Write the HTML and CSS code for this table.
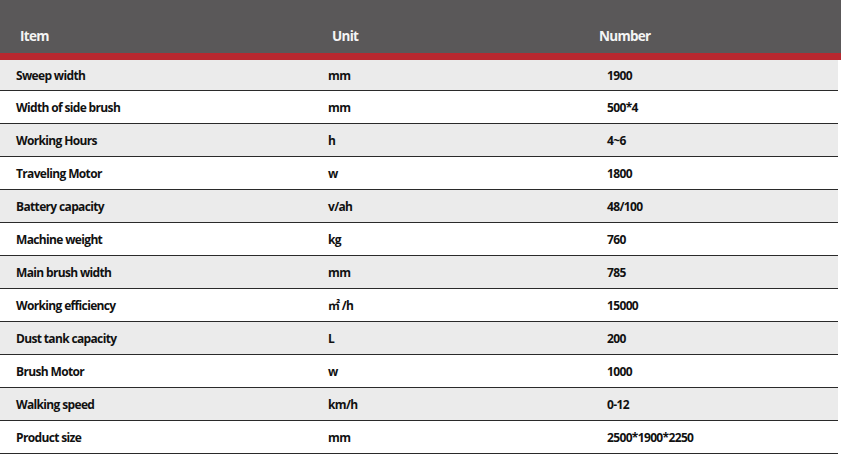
FILE: index.html
```html
<!DOCTYPE html>
<html>
<head>
<meta charset="utf-8">
<link rel="stylesheet" href="styles.css">
</head>
<body>
<div class="spec">
  <div class="head">
    <div class="hc c1">Item</div>
    <div class="hc c2">Unit</div>
    <div class="hc c3">Number</div>
  </div>
  <div class="row first odd"><div class="cell">Sweep width</div><div class="cell">mm</div><div class="cell">1900</div></div>
  <div class="row"><div class="cell">Width of side brush</div><div class="cell">mm</div><div class="cell">500*4</div></div>
  <div class="row odd"><div class="cell">Working Hours</div><div class="cell">h</div><div class="cell">4~6</div></div>
  <div class="row"><div class="cell">Traveling Motor</div><div class="cell">w</div><div class="cell">1800</div></div>
  <div class="row odd"><div class="cell">Battery capacity</div><div class="cell">v/ah</div><div class="cell">48/100</div></div>
  <div class="row"><div class="cell">Machine weight</div><div class="cell">kg</div><div class="cell">760</div></div>
  <div class="row odd"><div class="cell">Main brush width</div><div class="cell">mm</div><div class="cell">785</div></div>
  <div class="row"><div class="cell">Working efficiency</div><div class="cell">㎡ /h</div><div class="cell">15000</div></div>
  <div class="row odd"><div class="cell">Dust tank capacity</div><div class="cell">L</div><div class="cell">200</div></div>
  <div class="row"><div class="cell">Brush Motor</div><div class="cell">w</div><div class="cell">1000</div></div>
  <div class="row odd"><div class="cell">Walking speed</div><div class="cell">km/h</div><div class="cell">0-12</div></div>
  <div class="row"><div class="cell">Product size</div><div class="cell">mm</div><div class="cell">2500*1900*2250</div></div>
</div>
</body>
</html>
```
FILE: styles.css
```css
html, body {
  margin: 0;
  padding: 0;
  background: #ffffff;
}
body {
  font-family: "Open Sans", "Noto Sans CJK SC", sans-serif;
  color: #111111;
}
.spec {
  width: 841px;
}
.head {
  display: grid;
  grid-template-columns: 312px 279px 1fr;
  height: 53px;
  background: #5a5859;
  border-bottom: 7px solid #b8282f;
  align-items: center;
}
.hc {
  color: #f4f4f4;
  font-size: 13.5px;
  font-weight: 700;
  letter-spacing: -0.7px;
  padding-top: 19px;
}
.c1 { padding-left: 20px; }
.c2 { padding-left: 20px; }
.c3 { padding-left: 8px; }
.row {
  display: grid;
  grid-template-columns: 312px 279px 1fr;
  height: 32px;
  align-items: center;
  border-bottom: 1px solid #2a2a2a;
  margin-right: 3px;
  background: #ffffff;
}
.row.odd {
  background: #ebebeb;
}
.row.first {
  height: 29px;
  padding-top: 1px;
}
.cell {
  font-size: 12px;
  font-weight: 700;
  letter-spacing: -0.65px;
  padding-left: 16px;
}
```
